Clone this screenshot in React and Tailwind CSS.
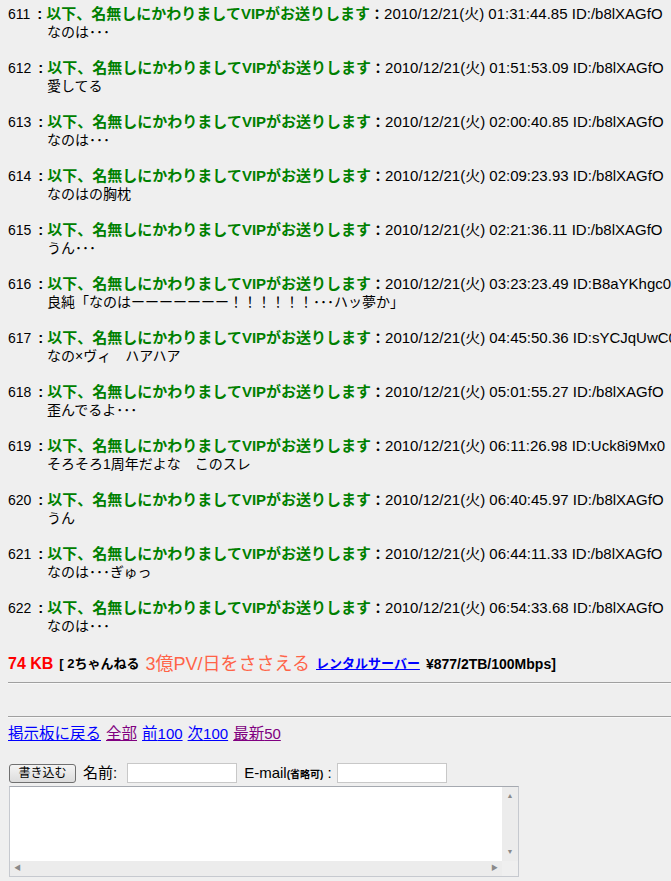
import React from "react";

const posts = [
  { no: 611, time: "01:31:44.85", id: "/b8lXAGfO", body: "なのは･･･" },
  { no: 612, time: "01:51:53.09", id: "/b8lXAGfO", body: "愛してる" },
  { no: 613, time: "02:00:40.85", id: "/b8lXAGfO", body: "なのは･･･" },
  { no: 614, time: "02:09:23.93", id: "/b8lXAGfO", body: "なのはの胸枕" },
  { no: 615, time: "02:21:36.11", id: "/b8lXAGfO", body: "うん･･･" },
  { no: 616, time: "03:23:23.49", id: "B8aYKhgc0", body: "良純「なのはーーーーーーー！！！！！！･･･ハッ夢か」" },
  { no: 617, time: "04:45:50.36", id: "sYCJqUwC0", body: "なの×ヴィ　ハアハア" },
  { no: 618, time: "05:01:55.27", id: "/b8lXAGfO", body: "歪んでるよ･･･" },
  { no: 619, time: "06:11:26.98", id: "Uck8i9Mx0", body: "そろそろ1周年だよな　このスレ" },
  { no: 620, time: "06:40:45.97", id: "/b8lXAGfO", body: "うん" },
  { no: 621, time: "06:44:11.33", id: "/b8lXAGfO", body: "なのは･･･ぎゅっ" },
  { no: 622, time: "06:54:33.68", id: "/b8lXAGfO", body: "なのは･･･" },
];

const font = "font-['MS_PGothic','Liberation_Sans','Noto_Sans_CJK_JP',sans-serif]";

const Post = ({ p }) => (
  <div className="mb-[18px]">
    <div className="h-[18px] leading-[18px] whitespace-nowrap text-[14px] text-black">
      <span>{p.no}</span>
      <span className="ml-[7px] font-bold text-[15px]">:</span>
      <span className="ml-[4px] font-bold text-[#008000] text-[15px]">以下、名無しにかわりましてVIPがお送りします</span>
      <span className="font-bold">：</span>
      <span className="text-[15px]">2010/12/21(火) {p.time} ID:{p.id}</span>
    </div>
    <div className="h-[18px] leading-[18px] pl-[39px] text-[14px] whitespace-nowrap">{p.body}</div>
  </div>
);

export default function App() {
  return (
    <div className={`min-h-[881px] w-[671px] overflow-hidden bg-[#efefef] pl-2 pt-[5px] ${font}`}>
      {posts.map((p) => (
        <Post key={p.no} p={p} />
      ))}

      <div className="mt-[2px] h-[22px] flex items-center whitespace-nowrap text-[13px] font-bold">
        <span className="text-[#ff0000] text-[16px]">74 KB</span>
        <span className="ml-[6px]">[ 2ちゃんねる</span>
        <span className="ml-[6px] text-[#ff6347] text-[18px] font-normal">3億PV/日をささえる</span>
        <a href="#" className="ml-[6px] text-[#0000ff] underline">レンタルサーバー</a>
        <span className="ml-[6px] text-[14px]">¥877/2TB/100Mbps]</span>
      </div>

      <div className="mt-[7px] h-[2px] border-t border-[#a0a0a0] bg-[#f8f8f8]" />
      <div className="mt-[32px] h-[2px] border-t border-[#a0a0a0] bg-[#f8f8f8]" />

      <div className="mt-[6px] flex gap-[5px] text-[15.5px] leading-[20px]">
        <a href="#" className="text-[#0000ff] underline">掲示板に戻る</a>
        <a href="#" className="text-[#800080] underline">全部</a>
        <a href="#" className="text-[#0000ff] underline">前<span className="text-[15px]">100</span></a>
        <a href="#" className="text-[#0000ff] underline">次<span className="text-[15px]">100</span></a>
        <a href="#" className="text-[#800080] underline">最新<span className="text-[15px]">50</span></a>
      </div>

      <div className="mt-[18px] flex items-center h-[22px] text-[15px]">
        <button className="ml-[1px] h-[19px] w-[67px] rounded-[3px] border border-[#707070] bg-gradient-to-b from-[#f4f4f4] to-[#dcdcdc] text-[12px] leading-[17px]">
          書き込む
        </button>
        <span className="ml-[7px]">名前:</span>
        <div className="ml-[10px] h-[20px] w-[110px] border border-[#c8c8c8] bg-white" />
        <span className="ml-[7px]">
          E-mail<span className="text-[10px] font-bold">(省略可)</span> :
        </span>
        <div className="ml-[5px] h-[20px] w-[110px] border border-[#c8c8c8] bg-white" />
      </div>

      <div className="mt-[2px] ml-[1px] w-[510px] h-[91px] border border-[#c6c9cf] border-t-[#a5a9b0] flex flex-col">
        <div className="flex flex-1">
          <div className="flex-1 bg-white" />
          <div className="w-[16px] bg-[#ececec] flex flex-col justify-between items-center py-[4px] text-[7px] text-[#8a8a8a]">
            <span>▲</span>
            <span>▼</span>
          </div>
        </div>
        <div className="h-[15px] flex">
          <div className="flex-1 bg-[#ececec] flex justify-between items-center px-[4px] text-[7px] text-[#8a8a8a]">
            <span>◀</span>
            <span>▶</span>
          </div>
          <div className="w-[16px] bg-[#efefef]" />
        </div>
      </div>
    </div>
  );
}
